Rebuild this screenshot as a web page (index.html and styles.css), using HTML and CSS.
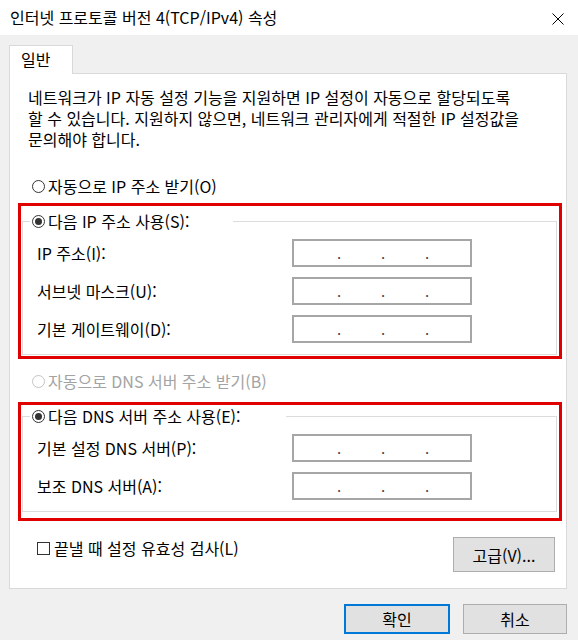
FILE: index.html
```html
<!DOCTYPE html>
<html lang="ko">
<head>
<meta charset="utf-8">
<title>인터넷 프로토콜 버전 4(TCP/IPv4) 속성</title>
<link rel="stylesheet" href="styles.css">
</head>
<body>
<div class="window">
  <div class="titlebar">
    <span class="title">인터넷 프로토콜 버전 4(TCP/IPv4) 속성</span>
    <svg class="close" width="12" height="12" viewBox="0 0 12 12"><path d="M0.5 0.5 L11.5 11.5 M11.5 0.5 L0.5 11.5" stroke="#000" stroke-width="1" fill="none"/></svg>
  </div>

  <div class="tabs"><div class="tab">일반</div></div>

  <div class="panel">
    <p class="desc">네트워크가 IP 자동 설정 기능을 지원하면 IP 설정이 자동으로 할당되도록<br>할 수 있습니다. 지원하지 않으면, 네트워크 관리자에게 적절한 IP 설정값을<br>문의해야 합니다.</p>

    <div class="radio-row auto-ip"><span class="radio"></span><span>자동으로 IP 주소 받기(O)</span></div>

    <div class="mark mark-ip">
      <fieldset class="group">
        <legend class="legend legend-ip"><span class="radio checked"></span><span>다음 IP 주소 사용(S):</span></legend>
        <div class="rows">
          <span class="lbl">IP 주소(I):</span>
          <div class="ip"><span class="dot">.</span><span class="dot">.</span><span class="dot">.</span></div>
          <span class="lbl">서브넷 마스크(U):</span>
          <div class="ip"><span class="dot">.</span><span class="dot">.</span><span class="dot">.</span></div>
          <span class="lbl">기본 게이트웨이(D):</span>
          <div class="ip"><span class="dot">.</span><span class="dot">.</span><span class="dot">.</span></div>
        </div>
      </fieldset>
    </div>

    <div class="radio-row auto-dns disabled"><span class="radio"></span><span>자동으로 DNS 서버 주소 받기(B)</span></div>

    <div class="mark mark-dns">
      <fieldset class="group">
        <legend class="legend legend-dns"><span class="radio checked"></span><span>다음 DNS 서버 주소 사용(E):</span></legend>
        <div class="rows">
          <span class="lbl">기본 설정 DNS 서버(P):</span>
          <div class="ip"><span class="dot">.</span><span class="dot">.</span><span class="dot">.</span></div>
          <span class="lbl">보조 DNS 서버(A):</span>
          <div class="ip"><span class="dot">.</span><span class="dot">.</span><span class="dot">.</span></div>
        </div>
      </fieldset>
    </div>

    <div class="bottom-row">
      <div class="check-row"><span class="checkbox"></span><span>끝낼 때 설정 유효성 검사(L)</span></div>
      <button class="btn btn-adv">고급(V)...</button>
    </div>
  </div>

  <div class="actions">
    <button class="btn btn-ok">확인</button>
    <button class="btn btn-cancel">취소</button>
  </div>
</div>
</body>
</html>
```

FILE: styles.css
```css
html, body {
  margin: 0;
  padding: 0;
}

body {
  width: 578px;
  height: 640px;
  overflow: hidden;
  background: #f0f0f0;
  font-family: "Noto Sans CJK KR", "Noto Sans", sans-serif;
  font-size: 16px;
  color: #000;
}

.window {
  display: flex;
  flex-direction: column;
}

.titlebar {
  height: 35px;
  background: #fff;
  display: flex;
  align-items: center;
  justify-content: space-between;
  padding: 0 14px 0 10px;
}

.title {
  line-height: 20px;
  padding-bottom: 2px;
}

.close {
  display: block;
  margin-top: 2px;
}

.tabs {
  margin: 10px 11px 0 9px;
  display: flex;
  align-items: flex-end;
  border-bottom: 1px solid #d9d9d9;
}

.tab {
  width: 64px;
  height: 29px;
  margin-bottom: -1px;
  box-sizing: border-box;
  background: #fff;
  border: 1px solid #d9d9d9;
  border-bottom: none;
  padding-left: 11px;
  line-height: 27px;
}

.panel {
  margin: 0 11px 0 9px;
  background: #fff;
  border: 1px solid #d9d9d9;
  border-top: none;
  padding: 0 0 16px 0;
  display: flex;
  flex-direction: column;
}

.desc {
  margin: 13px 0 0 18px;
  line-height: 21px;
}

.radio-row {
  display: flex;
  align-items: center;
  gap: 3px;
  height: 21px;
  line-height: 21px;
}

.auto-ip {
  margin: 26px 0 0 22px;
}

.auto-dns {
  margin: 12px 0 0 22px;
}

.disabled {
  color: #a3a3a3;
}

.radio {
  width: 13px;
  height: 13px;
  box-sizing: border-box;
  border: 1px solid #333;
  border-radius: 50%;
  background: #fff;
  display: flex;
  align-items: center;
  justify-content: center;
  flex: none;
}

.disabled .radio {
  border-color: #c4c4c4;
}

.radio.checked::after {
  content: "";
  width: 7px;
  height: 7px;
  border-radius: 50%;
  background: #333;
}

.mark {
  margin-left: 8px;
  width: 544px;
  box-sizing: border-box;
  border: 3px solid #e00000;
}

.mark-ip {
  margin-top: 6px;
  padding: 4px 2px 1px 1px;
}

.mark-dns {
  margin-top: 10px;
  padding: 0 2px 6px 1px;
}

.group {
  margin: 0;
  padding: 7px 0 11px 0;
  border: 1px solid #dcdcdc;
  min-width: 0;
}

.legend {
  margin-left: 7px;
  padding: 0 0 0 2px;
  height: 22px;
  box-sizing: border-box;
  display: flex;
  align-items: center;
  gap: 3px;
  line-height: 22px;
}

.legend-ip {
  width: 203px;
}

.legend-dns {
  width: 256px;
}

.rows {
  margin-left: 14px;
  display: grid;
  grid-template-columns: 255px 180px;
  row-gap: 10px;
  align-items: center;
}

.lbl {
  line-height: 21px;
}

.ip {
  width: 180px;
  height: 28px;
  box-sizing: border-box;
  border: 2px solid #a6a6a6;
  background: #fff;
  display: flex;
  align-items: center;
  padding-left: 43px;
  gap: 41px;
  line-height: 24px;
  font-size: 15px;
  color: #444;
}

.dot {
  width: 3px;
  text-align: center;
}

.bottom-row {
  margin: 16px 11px 0 27px;
  display: flex;
  justify-content: space-between;
  align-items: flex-start;
}

.check-row {
  display: flex;
  align-items: center;
  gap: 4px;
  height: 22px;
  line-height: 22px;
}

.checkbox {
  width: 13px;
  height: 13px;
  box-sizing: border-box;
  border: 1px solid #333;
  background: #fff;
  flex: none;
}

.btn {
  font-family: "Noto Sans CJK KR", "Noto Sans", sans-serif;
  font-size: 16px;
  color: #000;
  background: #e1e1e1;
  border: 1px solid #adadad;
  padding: 0;
  margin: 0;
  box-sizing: border-box;
  line-height: 20px;
}

.btn-adv {
  width: 102px;
  height: 35px;
}

.actions {
  margin-top: 15px;
  padding-right: 11px;
  display: flex;
  justify-content: flex-end;
  gap: 13px;
}

.btn-ok {
  width: 106px;
  height: 30px;
  border: 2px solid #0078d7;
}

.btn-cancel {
  width: 104px;
  height: 30px;
}
```
